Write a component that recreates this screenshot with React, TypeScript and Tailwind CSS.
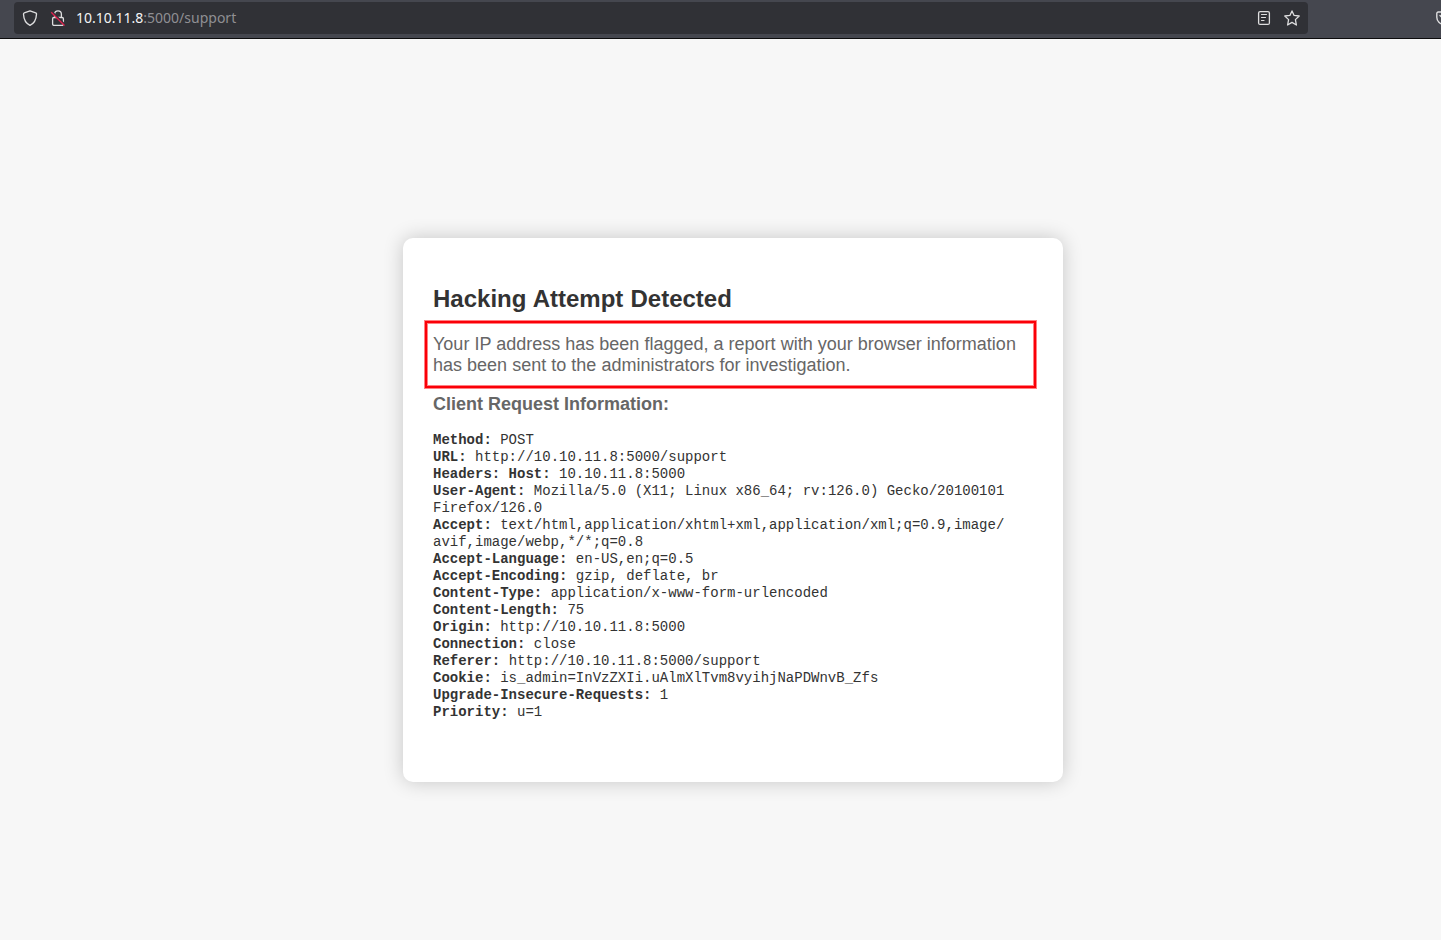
import React from "react";

type Line = { label?: string; value: string };

const lines: Line[] = [
  { label: "Method:", value: "POST" },
  { label: "URL:", value: "http://10.10.11.8:5000/support" },
  { label: "Headers: Host:", value: "10.10.11.8:5000" },
  { label: "User-Agent:", value: "Mozilla/5.0 (X11; Linux x86_64; rv:126.0) Gecko/20100101" },
  { value: "Firefox/126.0" },
  { label: "Accept:", value: "text/html,application/xhtml+xml,application/xml;q=0.9,image/" },
  { value: "avif,image/webp,*/*;q=0.8" },
  { label: "Accept-Language:", value: "en-US,en;q=0.5" },
  { label: "Accept-Encoding:", value: "gzip, deflate, br" },
  { label: "Content-Type:", value: "application/x-www-form-urlencoded" },
  { label: "Content-Length:", value: "75" },
  { label: "Origin:", value: "http://10.10.11.8:5000" },
  { label: "Connection:", value: "close" },
  { label: "Referer:", value: "http://10.10.11.8:5000/support" },
  { label: "Cookie:", value: "is_admin=InVzZXIi.uAlmXlTvm8vyihjNaPDWnvB_Zfs" },
  { label: "Upgrade-Insecure-Requests:", value: "1" },
  { label: "Priority:", value: "u=1" },
];

function Shield() {
  return (
    <svg className="size-4 shrink-0" viewBox="0 0 16 16" fill="none" stroke="#dededf" strokeWidth="1.3" strokeLinejoin="round">
      <path d="M8 .8 13.700 2.900c.6.2.9.6.8 1.2C14.300 9 12.400 13.200 8 15.300 3.600 13.200 1.700 9 1.500 4.100c0-.6.200-1 .800-1.200Z" />
    </svg>
  );
}

function InsecureLock() {
  return (
    <svg className="size-4 shrink-0" viewBox="0 0 16 16" fill="none" stroke="#dededf" strokeWidth="1.3">
      <path d="M4.600 7.500V4.200a3.400 3.400 0 0 1 6.800 0v3.300" />
      <rect x="2.600" y="7.500" width="10.800" height="7.900" rx="1.300" />
      <path d="M2 1.900 14.900 14.800" stroke="#303136" strokeWidth="2" />
      <path d="M1.200 2.200 14.500 15.500" stroke="#e0204c" strokeWidth="1.300" />
    </svg>
  );
}

function Reader() {
  return (
    <svg className="size-4 shrink-0" viewBox="0 0 16 16" fill="none" stroke="#dededf" strokeWidth="1.300" strokeLinecap="round">
      <rect x="2.600" y="1.600" width="10.800" height="12.800" rx="1.500" />
      <path d="M5.500 4.500h5M5.500 7.500h4M5.500 10.500h2.500" strokeWidth="1.200" />
    </svg>
  );
}

function Star() {
  return (
    <svg className="size-4 shrink-0" viewBox="0 0 16 16" fill="none" stroke="#dededf" strokeWidth="1.300" strokeLinejoin="round">
      <path d="m8 .900 2.100 4.500 5.100.600-3.800 3.600 1 5.400L8 12.400 3.600 15l1-5.400L.800 6l5.100-.600Z" />
    </svg>
  );
}

function Pocket() {
  return (
    <svg className="size-4 shrink-0" viewBox="0 0 16 16" fill="none" stroke="#dededf" strokeWidth="1.400" strokeLinecap="round" strokeLinejoin="round">
      <path d="M2.200 2h11.600c.8 0 1.400.6 1.400 1.400V7.200a7.200 7.200 0 0 1-14.400 0V3.400C.8 2.600 1.400 2 2.200 2Z" />
      <path d="m4 5.500 4 3.700 4-3.700" />
    </svg>
  );
}

export default function App() {
  return (
    <div className="flex h-[940px] w-[1441px] flex-col overflow-hidden bg-[#f7f7f7] font-['Liberation_Sans',Arial,sans-serif]">
      <header className="flex h-[39px] shrink-0 items-start border-b border-[#0c0c0d] bg-[#45474f] pt-0.5 pl-3.5">
        <div className="flex h-8 w-[1294px] shrink-0 items-center rounded bg-[#303136] px-2">
          <Shield />
          <span className="ml-3 flex"><InsecureLock /></span>
          <span className="ml-2.5 flex-1 font-['Noto_Sans',sans-serif] text-[14px] leading-5 text-[#8f8f93]">
            <span className="text-[#f4f4f5]">10.10.11.8</span>:5000/support
          </span>
          <Reader />
          <span className="ml-3 flex"><Star /></span>
        </div>
        <div className="mt-2 ml-32 flex"><Pocket /></div>
      </header>
      <main className="flex flex-1 pt-[199px] pl-[403px]">
        <section className="h-[544px] w-[660px] shrink-0 rounded-[10px] bg-white px-[30px] pt-[47px] text-[#333333] shadow-[0_0_20px_rgba(0,0,0,0.2)]">
          <h1 className="text-[24px] leading-7 font-bold [word-spacing:0.5px]">Hacking Attempt Detected</h1>
          <div className="mt-[7px] -ml-[9px] h-[69px] w-[613px] border border-[#ff8082]">
            <div className="h-full border-2 border-[#fb0007]">
              <div className="h-full border border-[#ff8082] pt-[10px] pl-[5px]">
                <p className="text-[18px] leading-[21px] whitespace-nowrap text-[#666666] [word-spacing:0.05px]">
                  Your IP address has been flagged, a report with your browser information
                  <br />
                  has been sent to the administrators for investigation.
                </p>
              </div>
            </div>
          </div>
          <h2 className="mt-[5px] text-[18px] leading-[21px] font-bold text-[#666666]">Client Request Information:</h2>
          <div className="mt-[17px] font-['Liberation_Mono',monospace] text-[14px] leading-[17px] whitespace-pre">
            {lines.map((line) => (
              <div key={line.value + (line.label ?? "")}>
                {line.label && <strong>{line.label} </strong>}
                {line.value}
              </div>
            ))}
          </div>
        </section>
      </main>
    </div>
  );
}
